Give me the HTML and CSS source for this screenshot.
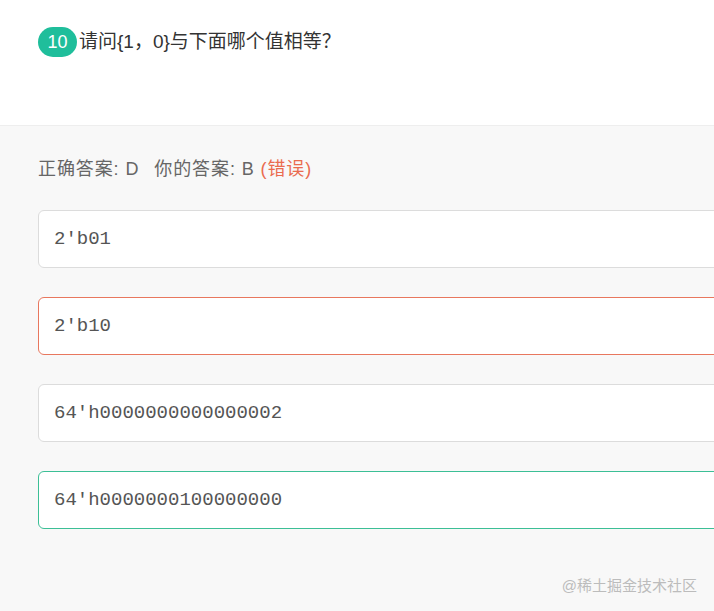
FILE: index.html
```html
<!DOCTYPE html>
<html lang="zh-CN">
<head>
<meta charset="utf-8">
<title>题目 10</title>
<link rel="stylesheet" href="styles.css">
</head>
<body>
<div class="page">
  <section class="question">
    <span class="badge">10</span><span class="q-text">请问{1，0}与下面哪个值相等？</span>
  </section>
  <section class="answers">
    <div class="result">正确答案: D<span class="sep"></span>你的答案: B <span class="wrong">(错误)</span></div>
    <div class="options">
      <div class="option">2'b01</div>
      <div class="option option-wrong">2'b10</div>
      <div class="option">64'h0000000000000002</div>
      <div class="option option-right">64'h0000000100000000</div>
    </div>
  </section>
  <div class="watermark">@稀土掘金技术社区</div>
</div>
</body>
</html>
```

FILE: styles.css
```css
html, body {
  margin: 0;
  padding: 0;
  height: 100%;
  overflow: hidden;
}
body {
  font-family: "Liberation Sans", "Noto Sans CJK SC", sans-serif;
  background: #f8f8f8;
}
.page {
  position: relative;
  min-height: 100%;
}
.question {
  background: #fff;
  height: 126px;
  box-sizing: border-box;
  padding: 27px 0 0 38px;
  border-bottom: 1px solid #eeeeee;
  display: flex;
  align-items: flex-start;
}
.badge {
  display: inline-block;
  width: 39px;
  height: 30px;
  line-height: 30px;
  border-radius: 15px;
  background: #1fbe9b;
  color: #fff;
  font-size: 18px;
  text-align: center;
}
.q-text {
  margin-left: 2px;
  font-size: 19px;
  line-height: 30px;
  color: #333;
}
.answers {
  padding: 31px 0 0 38px;
}
.result {
  font-size: 18px;
  letter-spacing: 0.9px;
  line-height: 24px;
  color: #666;
}
.sep {
  display: inline-block;
  width: 15px;
}
.wrong {
  color: #ea6b4f;
}
.options {
  margin-top: 29px;
  display: flex;
  flex-direction: column;
  gap: 29px;
}
.option {
  width: 720px;
  height: 58px;
  box-sizing: border-box;
  border: 1px solid #dcdcdc;
  border-radius: 6px;
  background: #fff;
  padding-left: 15px;
  display: flex;
  align-items: center;
  font-family: "Liberation Mono", monospace;
  font-size: 19px;
  color: #555;
}
.option-wrong {
  border-color: #e8775e;
}
.option-right {
  border-color: #3cbf96;
}
.watermark {
  position: absolute;
  right: 17px;
  top: 574px;
  font-size: 15px;
  color: #bcbcbc;
}
```
